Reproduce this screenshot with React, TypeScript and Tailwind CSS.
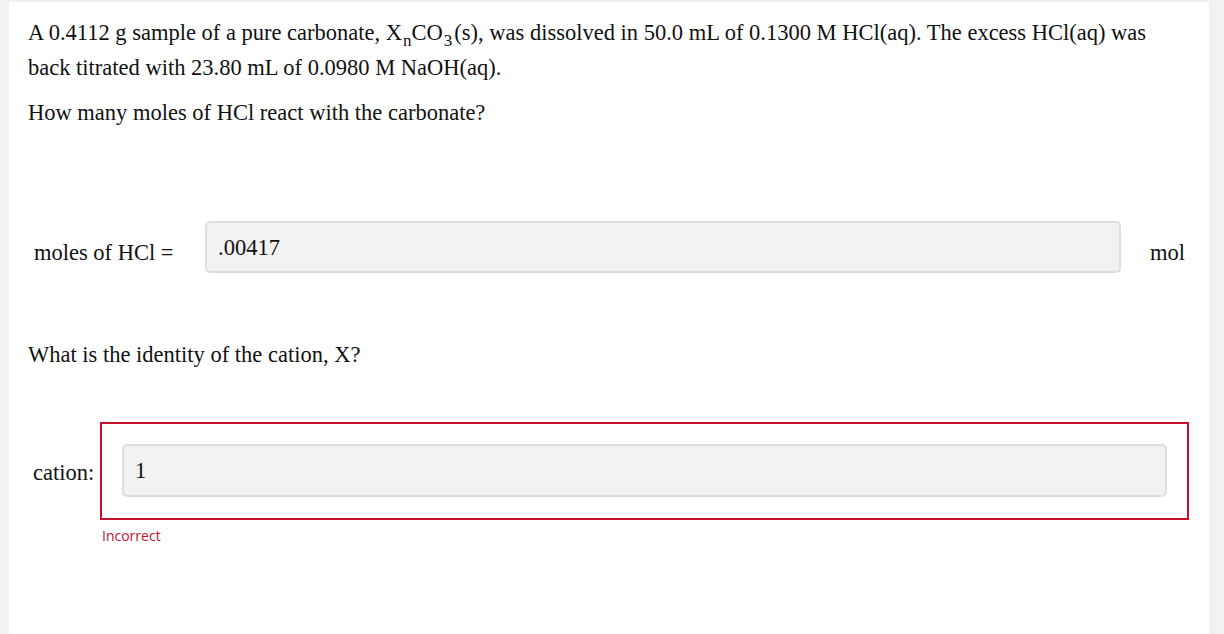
const serif = { fontFamily: '"Liberation Serif", "Times New Roman", serif' }

const AnswerBox = ({ value, className }: { value: string; className: string }) => {
  return (
    <div
      className={`h-[52px] shrink-0 rounded-[5px] border-2 border-[#dedede] bg-[#f2f2f2] pl-[11px] pt-[13px] text-[22.5px] leading-[24px] text-[#111] ${className}`}
    >
      {value}
    </div>
  )
}

const App = () => {
  return (
    <div className="min-h-screen bg-[#f2f2f2] pl-[9px] pt-[2px]" style={serif}>

      {/* Card */}
      <div className="w-[1200px] min-h-[632px] bg-white pl-[19px] pt-[13px] text-[22.5px] text-[#111]">

        {/* Question */}
        <p className="pr-[40px] leading-[35px]">
          A 0.4112 g sample of a pure carbonate, X<sub className="text-[17px] -bottom-[6px] ml-[1px]">n</sub>CO<sub className="text-[17px] -bottom-[6px] ml-[1px] mr-[2px]">3</sub>(s), was dissolved in 50.0 mL of 0.1300 M HCl(aq). The excess HCl(aq) was back titrated with 23.80 mL of 0.0980 M NaOH(aq).
        </p>
        <p className="mt-[10px] leading-[35px]">How many moles of HCl react with the carbonate?</p>

        {/* Moles row */}
        <div className="mt-[91px] flex items-center pl-[6px]">
          <span className="w-[171px] shrink-0 pt-[12px]">moles of HCl =</span>
          <AnswerBox value=".00417" className="w-[916px]" />
          <span className="ml-[29px] pt-[12px]">mol</span>
        </div>

        {/* Second part */}
        <p className="mt-[64px] leading-[35px]">What is the identity of the cation, X?</p>

        <div className="mt-[50px] flex items-center pl-[5px]">
          <span className="w-[67px] shrink-0 pt-[4px]">cation:</span>
          <div className="w-[1089px] shrink-0 border-2 border-[#c8102e] px-[20px] pt-[20px] pb-[21px]">
            <AnswerBox value="1" className="w-full h-[53px]" />
          </div>
        </div>
        <div
          className="ml-[74px] mt-[5px] text-[14px] text-[#c8102e]"
          style={{ fontFamily: '"Open Sans", "Liberation Sans", sans-serif' }}
        >
          Incorrect
        </div>

      </div>
    </div>
  )
}

export default App
